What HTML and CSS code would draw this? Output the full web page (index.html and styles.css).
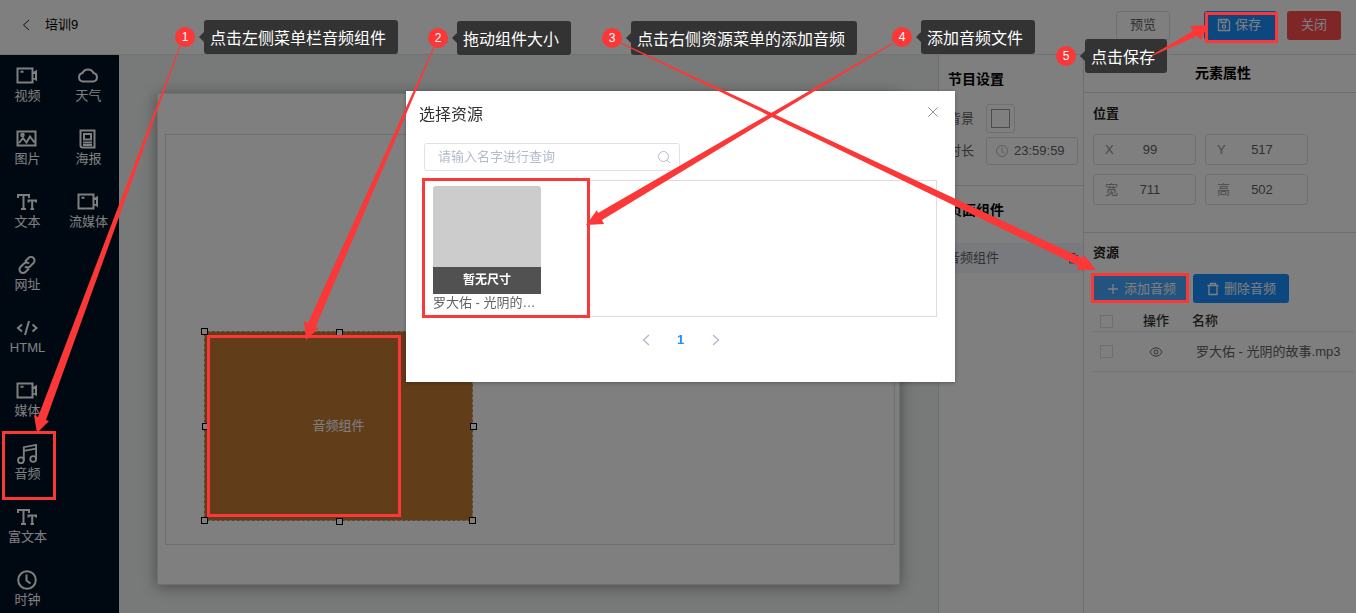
FILE: index.html
```html
<!DOCTYPE html>
<html lang="zh-CN">
<head>
<meta charset="utf-8">
<title>培训9</title>
<link rel="stylesheet" href="styles.css">
</head>
<body>
<svg class="defs" aria-hidden="true">
  <symbol id="i-video" viewBox="0 0 22 18"><path d="M1.500 1.500h15v14h-15zM4.500 4.700h3M16.500 6.500l3.500-2v8l-3.500-2" /></symbol>
  <symbol id="i-cloud" viewBox="0 0 22 18"><path d="M6 14.500a4.300 4.300 0 0 1-.5-8.500 6 6 0 0 1 11 0 4.300 4.300 0 0 1-.5 8.500z"/></symbol>
  <symbol id="i-image" viewBox="0 0 22 18"><path d="M1.500 1.500h18v14h-18zM3 13l4-5 3.500 4.500L14 6.500l4.500 6"/><circle cx="6.500" cy="5" r="1.300"/></symbol>
  <symbol id="i-poster" viewBox="0 0 22 20"><path d="M3.500 1.500h14v17H5.500a2 2 0 0 1-2-2zM7 5h7v5.500H7zM6 13.500h9M6 16h9"/></symbol>
  <symbol id="i-text" viewBox="0 0 22 18"><path d="M2 5V2h11v3M7.500 2v14M5 16h5M12.500 9.500V7.500H20v2M16.200 7.500V16M14.500 16H18"/></symbol>
  <symbol id="i-link" viewBox="0 0 22 18"><path d="M9 5.500 12.500 2a3.500 3.500 0 0 1 5 5l-3.500 3.500a3.500 3.500 0 0 1-5 0M13 12.500 9.500 16a3.500 3.500 0 0 1-5-5L8 7.500a3.500 3.500 0 0 1 5 0"/></symbol>
  <symbol id="i-code" viewBox="0 0 22 18"><path d="M6 5.500 2 9l4 3.500M16.500 5.500 20.500 9l-4 3.500M13 2 9 16"/></symbol>
  <symbol id="i-music" viewBox="0 0 22 22"><path d="M7.500 18.500V3.500L21 1V16.500M7.500 7.500l13.500-2.500"/><circle cx="4.300" cy="18" r="3.200"/><circle cx="17.800" cy="16.500" r="3.200"/></symbol>
  <symbol id="i-clock" viewBox="0 0 20 20"><circle cx="10" cy="10" r="8.800"/><path d="M9.500 4.500V10.500l4 3"/></symbol>
</svg>

<div class="app">
  <header class="topbar">
    <button class="back" aria-label="返回"><svg viewBox="0 0 8 12"><path d="M7 1 1.500 6 7 11"/></svg></button>
    <h1 class="title">培训9</h1>
    <div class="actions">
      <button class="btn btn-plain btn-preview">预览</button>
      <button class="btn btn-primary btn-save"><svg viewBox="0 0 14 14"><path d="M1.500 1.500h9l2 2v9h-11zM4 1.500v3h5v-3"/><circle cx="7" cy="8.500" r="1.700"/></svg>保存</button>
      <button class="btn btn-danger">关闭</button>
    </div>
  </header>

  <div class="workspace">
    <nav class="palette">
      <ul class="palette-col">
        <li><button class="tool"><svg><use href="#i-video"/></svg>视频</button></li>
        <li><button class="tool"><svg><use href="#i-image"/></svg>图片</button></li>
        <li><button class="tool"><svg><use href="#i-text"/></svg>文本</button></li>
        <li><button class="tool"><svg><use href="#i-link"/></svg>网址</button></li>
        <li><button class="tool"><svg><use href="#i-code"/></svg>HTML</button></li>
        <li><button class="tool"><svg><use href="#i-video"/></svg>媒体</button></li>
        <li><button class="tool"><svg><use href="#i-music"/></svg>音频</button></li>
        <li><button class="tool"><svg><use href="#i-text"/></svg>富文本</button></li>
        <li><button class="tool"><svg><use href="#i-clock"/></svg>时钟</button></li>
      </ul>
      <ul class="palette-col">
        <li><button class="tool"><svg><use href="#i-cloud"/></svg>天气</button></li>
        <li><button class="tool"><svg><use href="#i-poster"/></svg>海报</button></li>
        <li><button class="tool"><svg><use href="#i-video"/></svg>流媒体</button></li>
      </ul>
    </nav>

    <main class="stage">
      <div class="page">
        <div class="screen">
          <div class="widget">音频组件
            <i class="handle tl"></i><i class="handle tm"></i><i class="handle ml"></i><i class="handle mr"></i>
            <i class="handle bl"></i><i class="handle bm"></i><i class="handle br"></i>
          </div>
        </div>
      </div>
    </main>

    <aside class="program">
      <section class="program-settings">
        <h2 class="heading">节目设置</h2>
        <div class="row"><span class="row-label">背景</span><button class="swatch" aria-label="背景"><span></span></button></div>
        <div class="row"><label class="row-label" for="duration">时长</label>
          <div class="time"><svg viewBox="0 0 14 14"><circle cx="7" cy="7" r="5.500"/><path d="M7 3.500V7.500l2.500 1.500"/></svg><input id="duration" value="23:59:59"></div></div>
      </section>
      <section class="layers">
        <h2 class="heading">页面组件</h2>
        <div class="layer"><span>音频组件</span><svg viewBox="0 0 12 12"><path d="M1 3.500h10M4 3.500v-2h4v2M2.500 3.500v7.500h7V3.500"/></svg></div>
      </section>
    </aside>

    <aside class="props">
      <h2 class="heading props-title">元素属性</h2>
      <section class="position">
        <h3 class="subheading">位置</h3>
        <div class="fields">
          <label class="field"><span>X</span><input value="99"></label>
          <label class="field"><span>Y</span><input value="517"></label>
          <label class="field"><span>宽</span><input value="711"></label>
          <label class="field"><span>高</span><input value="502"></label>
        </div>
      </section>
      <section class="resources">
        <h3 class="subheading">资源</h3>
        <div class="resource-actions">
          <button class="btn btn-primary btn-add"><svg viewBox="0 0 14 14"><path d="M7 2v10M2 7h10"/></svg>添加音频</button>
          <button class="btn btn-primary"><svg viewBox="0 0 14 14"><path d="M1.500 3.500h11M4.500 3.500v-2h5v2M3 3.500v9h8v-9"/></svg>删除音频</button>
        </div>
        <table class="files">
          <thead><tr><th class="c-check"><input type="checkbox" aria-label="全选"></th><th class="c-op">操作</th><th>名称</th></tr></thead>
          <tbody><tr><td class="c-check"><input type="checkbox" aria-label="选择"></td><td class="c-op"><svg viewBox="0 0 14 12"><path d="M1 6c2.500-5.500 9.500-5.500 12 0-2.500 5.500-9.500 5.500-12 0z"/><circle cx="7" cy="6" r="2"/></svg></td><td class="c-name">罗大佑 - 光阴的故事.mp3</td></tr></tbody>
        </table>
      </section>
    </aside>
  </div>
</div>

<div class="mask">
  <div class="dialog" role="dialog" aria-labelledby="dlg-title">
    <div class="dialog-head">
      <h2 class="dialog-title" id="dlg-title">选择资源</h2>
      <button class="dialog-close" aria-label="关闭"><svg viewBox="0 0 12 12"><path d="M1.500 1.500l9 9M10.500 1.500l-9 9"/></svg></button>
    </div>
    <div class="search">
      <input aria-label="名字" placeholder="请输入名字进行查询">
      <svg viewBox="0 0 14 14"><circle cx="6.500" cy="6.500" r="5"/><path d="M10.200 10.200 13 13"/></svg>
    </div>
    <div class="gallery">
      <figure class="card"><div class="thumb"><span>暂无尺寸</span></div><figcaption>罗大佑 - 光阴的…</figcaption></figure>
    </div>
    <div class="pager">
      <button aria-label="上一页"><svg viewBox="0 0 8 12"><path d="M7 1 1.500 6 7 11"/></svg></button>
      <button class="current">1</button>
      <button aria-label="下一页"><svg viewBox="0 0 8 12"><path d="M1 1 6.500 6 1 11"/></svg></button>
    </div>
  </div>
</div>

<div class="guide">
  <div class="step step-1"><b>1</b><span>点击左侧菜单栏音频组件</span></div>
  <div class="step step-2"><b>2</b><span>拖动组件大小</span></div>
  <div class="step step-3"><b>3</b><span>点击右侧资源菜单的添加音频</span></div>
  <div class="step step-4"><b>4</b><span>添加音频文件</span></div>
  <div class="step step-5"><b>5</b><span>点击保存</span></div>
  <svg class="arrows" width="1356" height="613" viewBox="0 0 1356 613">
    <g class="boxes">
      <rect x="3.500" y="432.500" width="51" height="66"/>
      <rect x="208.500" y="336.500" width="191" height="179"/>
      <rect x="423.500" y="179.500" width="165" height="137"/>
      <rect x="1092.500" y="274.500" width="95" height="27"/>
      <rect x="1206.500" y="13.500" width="70" height="28"/>
    </g>
    <path d="M179.500 46h1L46 420l3 1-12 12-3-18 4 2z"/>
    <path d="M433.500 47h1.200L315.500 327l3.500 1-13 12-2-19 4 2z"/>
    <path d="M621 42.500 1082 258l2-3 12 15-19 0 2-4L621 43.700z"/>
    <path d="M893 42.500 598 213l-1-3-11 15 18-1-2-4L893 43.700z"/>
    <path d="M1152 55 1193 31l-3-5 18-1-7 15-4-4-45 20z"/>
  </svg>
</div>
</body>
</html>
```
FILE: styles.css
```css
* { box-sizing: border-box; }
body {
  margin: 0;
  overflow: hidden;
  font: 13px/20px "Liberation Sans", "Noto Sans CJK SC", sans-serif;
  color: #606266;
}
button, input { font: inherit; color: inherit; }
button { margin: 0; padding: 0; border: 0; background: none; }
h1, h2, h3, ul, figure { margin: 0; padding: 0; }
ul { list-style: none; }
svg { fill: none; stroke: currentColor; flex: none; }
.defs { position: absolute; width: 0; height: 0; }

.app { display: flex; flex-direction: column; height: 100vh; background: #fff; }

.topbar {
  display: flex;
  align-items: center;
  height: 55px;
  padding: 0 15px 4px 22px;
  border-bottom: 1px solid #e4e4e4;
}
.back { display: flex; color: #222; }
.back svg { width: 8px; height: 12px; }
.title { margin-left: 15px; font-size: 13px; font-weight: 400; color: #000; }
.actions { display: flex; gap: 10px; margin-left: auto; }

.btn {
  display: flex;
  align-items: center;
  justify-content: center;
  gap: 4px;
  height: 29px;
  padding: 0 13px;
  border-radius: 3px;
  color: #fff;
}
.btn svg { width: 14px; height: 14px; stroke-width: 1.300; }
.btn-plain { border: 1px solid #dcdfe6; color: #606266; }
.btn-preview { margin-right: 24px; }
.btn-save { width: 73px; padding: 0 15px 0 12px; }
.btn-primary { background: #1890ff; }
.btn-danger { padding: 0 14px; background: #ff4d4f; }

.workspace { display: flex; flex: 1; min-height: 0; }

.palette {
  display: flex;
  justify-content: space-between;
  width: 119px;
  padding-top: 11px;
  background: #001224;
  color: #fff;
  overflow: hidden;
}
.palette-col { width: 61px; }
.palette-col:first-child { width: 55px; }
.tool {
  display: flex;
  flex-direction: column;
  align-items: center;
  width: 100%;
  height: 63px;
}
.tool svg { width: 22px; height: 20px; margin-right: 2px; stroke-width: 2; }

.stage { display: flex; flex: 1; padding: 38px 38px 28px 38px; background: #f0f4f2; }
.page {
  display: flex;
  flex: 1;
  padding: 40px 4px 39px 7px;
  background: #fff;
  border: 1px solid #e0e0e0;
  box-shadow: 0 2px 14px rgba(0, 0, 0, .4);
}
.screen { position: relative; flex: 1; border: 1px solid #dcdcdc; }
.widget {
  position: absolute;
  left: 38px;
  top: 196px;
  width: 269px;
  height: 190px;
  display: flex;
  align-items: center;
  justify-content: center;
  background: #c27a34;
  border: 1px dashed #ccc;
  color: #fff;
}
.handle { position: absolute; width: 7px; height: 7px; border: 1px solid #000; background: #fff; }
.tl { left: -4px; top: -4px; }
.tm { left: 131px; top: -3px; }
.ml { left: -3px; top: 91px; }
.mr { right: -5px; top: 91px; }
.bl { left: -4px; bottom: -4px; }
.bm { left: 131px; bottom: -5px; }
.br { right: -4px; bottom: -4px; }

.heading { font-size: 14px; font-weight: 700; color: #000; }
.subheading { font-size: 13px; font-weight: 700; color: #222; }

.program { width: 145px; border-left: 1px solid #dcdcdc; }
.program-settings { height: 131px; padding: 14px 5px 0 9px; border-bottom: 1px solid #dcdcdc; }
.program-settings .heading { margin-bottom: 15px; }
.row { display: flex; align-items: center; gap: 12px; margin-bottom: 4px; }
.row-label { width: 26px; white-space: nowrap; }
.swatch { width: 29px; height: 29px; padding: 4px; border: 1px solid #dcdfe6; border-radius: 3px; }
.swatch span { display: block; height: 19px; border: 1px solid #999; }
.time {
  display: flex;
  align-items: center;
  gap: 5px;
  flex: 1;
  height: 28px;
  padding-left: 8px;
  border: 1px solid #dcdfe6;
  border-radius: 3px;
}
.time svg { width: 14px; height: 14px; color: #b5b8c0; }
.time input { width: 100%; min-width: 0; padding: 0; border: 0; background: none; }
.layers { padding-top: 14px; }
.layers .heading { padding-left: 9px; margin-bottom: 23px; }
.layer {
  display: flex;
  align-items: center;
  justify-content: space-between;
  height: 30px;
  padding: 0 4px 0 8px;
  background: #f2f5fa;
}
.layer svg { width: 12px; height: 12px; }

.props { width: 273px; border-left: 1px solid #dcdcdc; }
.props-title { height: 38px; padding: 8px 0 0 6px; text-align: center; border-bottom: 1px solid #dcdcdc; }
.position { height: 140px; padding: 11px 48px 0 9px; border-bottom: 1px solid #dcdcdc; }
.fields { display: grid; grid-template-columns: 1fr 1fr; gap: 9px; margin-top: 10px; }
.field {
  display: flex;
  align-items: center;
  height: 31px;
  padding: 0 11px;
  border: 1px solid #dcdfe6;
  border-radius: 3px;
}
.field span { width: 15px; color: #909399; }
.field input { flex: 1; width: 0; min-width: 0; padding: 0 4px 0 0; border: 0; background: none; text-align: center; }
.resources { padding: 10px 2px 0 9px; }
.resource-actions { display: flex; gap: 4px; margin: 11px 0 8px; }
.resource-actions .btn-add { background: #46a6ff; }
.files { width: 100%; border-collapse: collapse; text-align: left; color: #606266; }
.files th { height: 20px; padding: 0; font-weight: 500; color: #333; border-bottom: 1px solid #e4e7ed; }
.files td { height: 40px; padding: 0; border-bottom: 1px solid #e4e7ed; }
.files .c-check { width: 43px; padding-left: 7px; }
.files .c-op { width: 56px; padding-right: 16px; text-align: center; }
.files .c-name { padding-left: 4px; white-space: nowrap; }
.files svg { display: inline-block; width: 14px; height: 12px; vertical-align: middle; }
.files input { display: block; appearance: none; width: 13px; height: 13px; margin: 0; border: 1px solid #dcdfe6; }

.mask {
  position: fixed;
  inset: 0;
  display: flex;
  align-items: flex-start;
  justify-content: center;
  padding: 91px 0 0 5px;
  background: rgba(0, 0, 0, .5);
}
.dialog {
  width: 549px;
  padding: 13px 18px 31px;
  background: #fff;
  box-shadow: 0 1px 4px rgba(0, 0, 0, .3);
}
.dialog-head { display: flex; align-items: flex-start; justify-content: space-between; height: 22px; margin: 0 -2px 0 -5px; }
.dialog-title { font-size: 16px; font-weight: 400; line-height: 22px; color: #303133; }
.dialog-close { display: flex; padding-top: 2px; color: #909399; }
.dialog-close svg { width: 12px; height: 12px; }
.search {
  display: flex;
  align-items: center;
  width: 256px;
  height: 28px;
  margin-top: 17px;
  padding: 0 8px 0 13px;
  border: 1px solid #dce4e8;
  border-radius: 3px;
}
.search input { flex: 1; min-width: 0; padding: 0; border: 0; outline: 0; background: none; }
.search input::placeholder { color: #b4bccc; }
.search svg { width: 14px; height: 14px; color: #b4bccc; }
.gallery { height: 137px; margin: 9px 0 12px -1px; padding: 5px 9px; border: 1px solid #dcdcdc; }
.card { width: 108px; }
.thumb { display: flex; align-items: flex-end; height: 108px; background: #ccc; border-radius: 3px 3px 0 0; }
.thumb span { flex: 1; background: #515151; color: #fff; font-size: 12px; font-weight: 700; line-height: 27px; text-align: center; }
.card figcaption { line-height: 18px; white-space: nowrap; }
.pager { display: flex; justify-content: center; align-items: center; gap: 5px; height: 22px; color: #b4bccc; }
.pager button { display: flex; justify-content: center; width: 30px; }
.pager svg { width: 8px; height: 12px; stroke-width: 1.500; }
.pager .current { font-weight: 700; color: #1890ff; }

.guide { position: absolute; left: 0; top: 0; pointer-events: none; }
.arrows { position: absolute; left: 0; top: 0; fill: #fb3737; stroke: none; }
.boxes { fill: none; stroke: #fb3737; stroke-width: 3; }
.step { position: absolute; display: flex; align-items: center; gap: 9px; white-space: nowrap; }
.step b {
  width: 20px;
  border-radius: 50%;
  background: #fb3737;
  color: #fff;
  font-size: 12px;
  font-weight: 400;
  text-align: center;
}
.step span {
  position: relative;
  padding: 3px 12px 0 6px;
  border-radius: 3px;
  background: #333;
  color: #fff;
  font-size: 16px;
  line-height: 31px;
}
.step span::before {
  content: "";
  position: absolute;
  left: -5px;
  top: 12px;
  border: 5px solid transparent;
  border-left: 0;
  border-right-color: #333;
}
.step-1 { left: 175px; top: 20px; }
.step-2 { left: 428px; top: 21px; }
.step-3 { left: 602px; top: 21px; }
.step-4 { left: 892px; top: 20px; }
.step-5 { left: 1056px; top: 39px; }
```
